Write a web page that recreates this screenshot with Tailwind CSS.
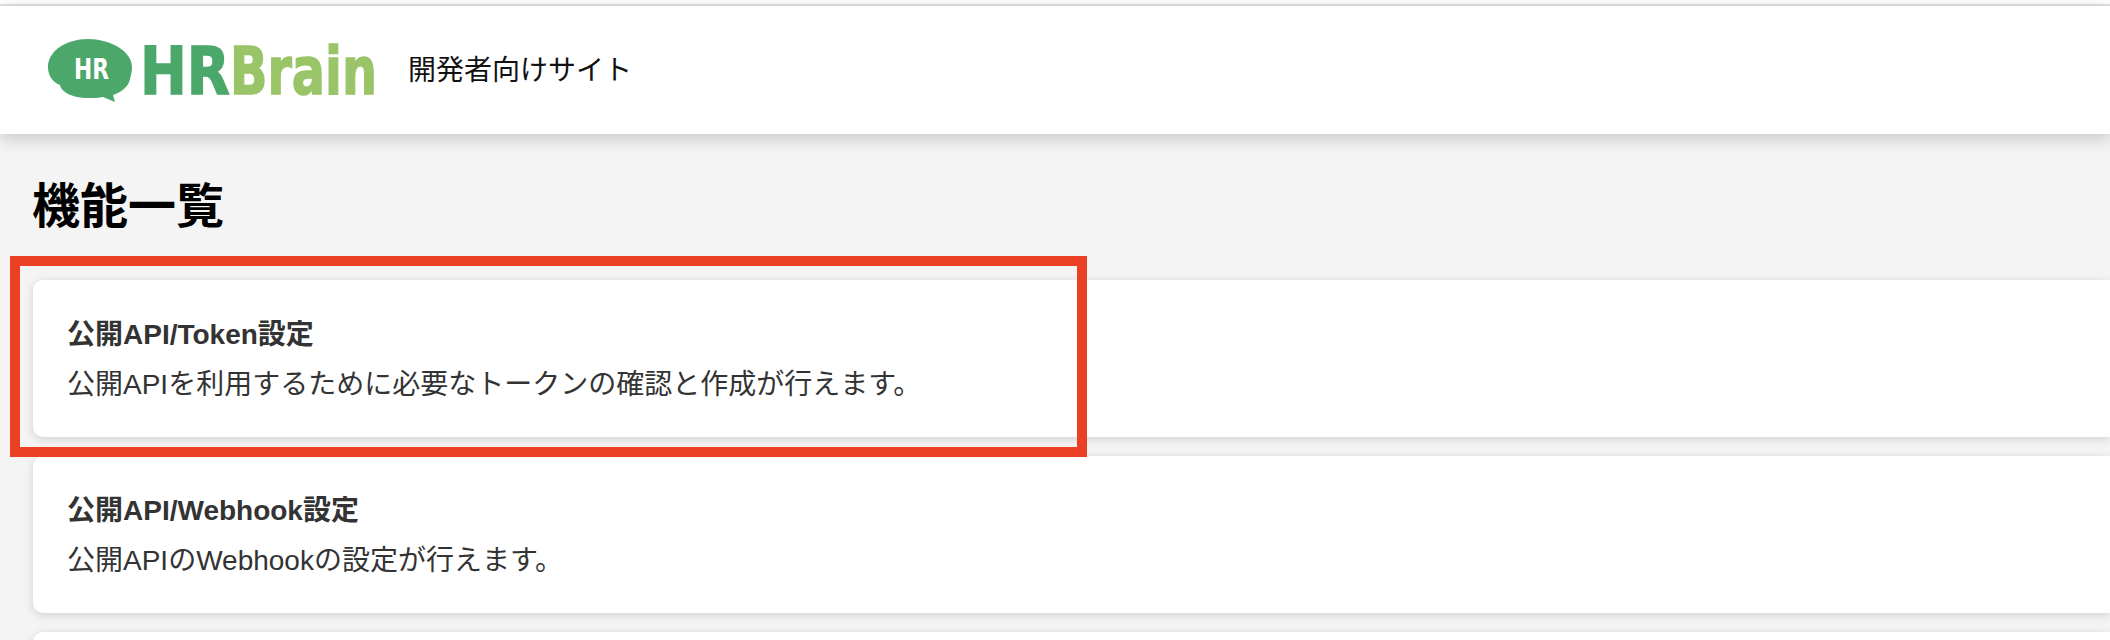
<!DOCTYPE html>
<html lang="ja">
<head>
  <meta charset="UTF-8" />
  <title>機能一覧</title>
  <script src="https://cdn.jsdelivr.net/npm/@tailwindcss/browser@4"></script>
</head>
<body class="bg-[#f4f4f4] h-[640px] overflow-hidden font-['Liberation_Sans','Noto_Sans_CJK_JP',sans-serif]">
  <div class="h-[6px] bg-white border-b-2 border-[#e2e2e2]"></div>

  <!-- header -->
  <header class="relative z-10 h-[128px] bg-white shadow-[0_4px_16px_rgba(0,0,0,0.2)] flex items-center pl-[48px]">
    <svg width="330" height="86" viewBox="0 -10 330 86" class="shrink-0 mt-[3px]">
      <path d="M40 0C18 0 0 12 0 28c0 8 4 15 12 18 1 7 13 13 28 13 6 0 11 0 15-1l12 5-2-7c9-3 16-9 17-16 1-4 2-8 2-12C84 12 62 0 40 0z" fill="#4ba76a"/>
      <text x="26" y="40" fill="#fff" font-size="29" font-weight="700" textLength="35" lengthAdjust="spacingAndGlyphs" font-family="'DejaVu Sans',sans-serif">HR</text>
      <text x="92" y="55" fill="#4ba76a" stroke="#4ba76a" stroke-width="1.5" font-size="66" font-weight="700" textLength="90" lengthAdjust="spacingAndGlyphs" font-family="'DejaVu Sans',sans-serif">HR</text>
      <text x="182" y="55" fill="#9ac468" stroke="#9ac468" stroke-width="1.5" font-size="66" font-weight="700" textLength="147" lengthAdjust="spacingAndGlyphs" font-family="'DejaVu Sans',sans-serif">Brain</text>
    </svg>
    <span class="ml-[30px] mt-[1px] text-[28px] text-[#111]">開発者向けサイト</span>
  </header>

  <main class="pl-[33px] h-[506px] overflow-hidden">
    <h1 class="mt-[40px] mb-[40px] -ml-[1px] text-[48px] leading-[66px] font-bold text-black">機能一覧</h1>

    <div class="flex flex-col gap-[19px]">
      <a class="block h-[157px] rounded-l-[10px] bg-white shadow-[0_2px_10px_rgba(0,0,0,0.15)] pl-[34px] pt-[35px] text-[#333]">
        <div class="text-[28px] leading-[40px] font-bold">公開API/Token設定</div>
        <div class="mt-[10px] text-[28px] leading-[40px]">公開APIを利用するために必要なトークンの確認と作成が行えます。</div>
      </a>
      <a class="block h-[157px] rounded-l-[10px] bg-white shadow-[0_2px_10px_rgba(0,0,0,0.15)] pl-[34px] pt-[35px] text-[#333]">
        <div class="text-[28px] leading-[40px] font-bold">公開API/Webhook設定</div>
        <div class="mt-[10px] text-[28px] leading-[40px]">公開APIのWebhookの設定が行えます。</div>
      </a>
      <div class="h-[157px] rounded-l-[10px] bg-white shadow-[0_2px_10px_rgba(0,0,0,0.15)]"></div>
    </div>
  </main>

  <!-- annotation rectangle -->
  <div class="absolute left-[10px] top-[256px] w-[1077px] h-[201px] border-[10px] border-[#ec4024]"></div>
</body>
</html>
